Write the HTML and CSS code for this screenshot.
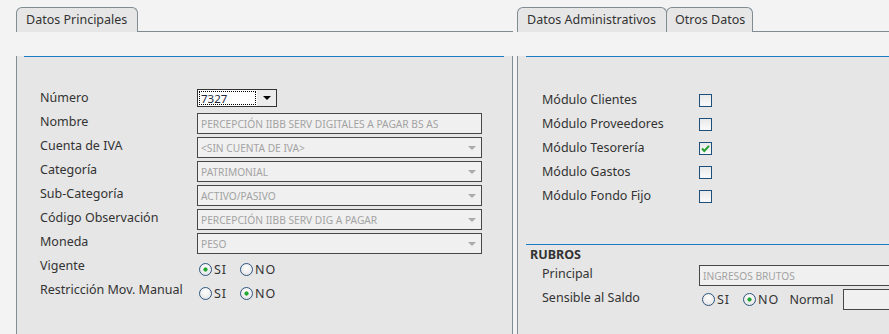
FILE: index.html
```html
<!DOCTYPE html>
<html lang="es">
<head>
    <meta charset="UTF-8">
    <title>Cuenta contable</title>
    <link rel="stylesheet" href="styles.css">
</head>
<body>
    <div class="workspace">
        <section class="panel panel-main">
            <div class="tabs">
                <div class="tab">Datos Principales</div>
                <div class="tab-fill"></div>
            </div>
            <div class="panel-body">
                <hr class="rule">
                <div class="form">
                    <div class="row">
                        <span class="lbl">Número</span>
                        <div class="combo">
                            <span class="combo-value">7327</span>
                            <span class="combo-btn"><span class="caret dark"></span></span>
                        </div>
                    </div>
                    <div class="row">
                        <span class="lbl">Nombre</span>
                        <div class="field">Percepción IIBB Serv Digitales a pagar Bs As</div>
                    </div>
                    <div class="row">
                        <span class="lbl">Cuenta de IVA</span>
                        <div class="field">&lt;Sin cuenta de IVA&gt;<span class="caret"></span></div>
                    </div>
                    <div class="row">
                        <span class="lbl">Categoría</span>
                        <div class="field">Patrimonial<span class="caret"></span></div>
                    </div>
                    <div class="row">
                        <span class="lbl">Sub-Categoría</span>
                        <div class="field">Activo/Pasivo<span class="caret"></span></div>
                    </div>
                    <div class="row">
                        <span class="lbl">Código Observación</span>
                        <div class="field">Percepción IIBB Serv Dig a pagar<span class="caret"></span></div>
                    </div>
                    <div class="row">
                        <span class="lbl">Moneda</span>
                        <div class="field">Peso<span class="caret"></span></div>
                    </div>
                    <div class="row">
                        <span class="lbl">Vigente</span>
                        <div class="options">
                            <span class="radio checked"></span><span class="opt">SI</span>
                            <span class="radio"></span><span class="opt">NO</span>
                        </div>
                    </div>
                    <div class="row">
                        <span class="lbl">Restricción Mov. Manual</span>
                        <div class="options">
                            <span class="radio"></span><span class="opt">SI</span>
                            <span class="radio checked"></span><span class="opt">NO</span>
                        </div>
                    </div>
                </div>
            </div>
        </section>

        <section class="panel panel-side">
            <div class="tabs">
                <div class="tab">Datos Administrativos</div>
                <div class="tab tab-next">Otros Datos</div>
                <div class="tab-fill"></div>
            </div>
            <div class="panel-body">
                <hr class="rule">
                <div class="form form-side">
                    <div class="row"><span class="lbl">Módulo Clientes</span><span class="check"></span></div>
                    <div class="row"><span class="lbl">Módulo Proveedores</span><span class="check"></span></div>
                    <div class="row">
                        <span class="lbl">Módulo Tesorería</span>
                        <span class="check">
                            <svg width="11" height="11" viewBox="0 0 11 11"><path d="M2 5.5 L4.3 8 L9 2.8" fill="none" stroke="#22a032" stroke-width="2"/></svg>
                        </span>
                    </div>
                    <div class="row"><span class="lbl">Módulo Gastos</span><span class="check"></span></div>
                    <div class="row"><span class="lbl">Módulo Fondo Fijo</span><span class="check"></span></div>
                </div>
                <hr class="rule rule-rubros">
                <div class="group-title">RUBROS</div>
                <div class="form">
                    <div class="row">
                        <span class="lbl">Principal</span>
                        <div class="field field-wide">Ingresos Brutos</div>
                    </div>
                    <div class="row">
                        <span class="lbl">Sensible al Saldo</span>
                        <div class="options options-side">
                            <span class="radio"></span><span class="opt">SI</span>
                            <span class="radio checked"></span><span class="opt">NO</span>
                            <span class="opt-label">Normal</span>
                            <div class="field field-small"></div>
                        </div>
                    </div>
                </div>
            </div>
        </section>
    </div>
</body>
</html>
```

FILE: styles.css
```css
body {
    margin: 0;
    background-color: #f3f3f3;
    font-family: "Noto Sans", Arial, sans-serif;
    font-size: 12.5px;
    color: #333;
    overflow: hidden;
}
.workspace {
    display: flex;
    gap: 4px;
    padding: 7px 0 0 16px;
}
.panel { flex-shrink: 0; }
.panel-main { width: 497px; }
.panel-side { width: 420px; }

.tabs { display: flex; height: 25px; }
.tab {
    box-sizing: border-box;
    height: 25px;
    padding: 0 10px 0 9px;
    border: 1px solid #7f8c92;
    border-bottom: none;
    border-radius: 6px 6px 0 0;
    background: #e6e6e6;
    line-height: 24px;
    white-space: nowrap;
}
.tab-next { margin-left: -1px; padding: 0 7px 0 8px; }
.tab-fill { flex: 1; border-bottom: 1px solid #7f8c92; }

.panel-body {
    height: 320px;
    padding: 0 8px 0 7px;
    border: 1px solid #7f8c92;
    border-top: none;
    background: #e6e6e6;
}
.panel-side .panel-body { padding: 0 0 0 8px; }

.rule {
    height: 0;
    margin: 24px 0 0;
    border: 0;
    border-top: 1px solid #1b7bc2;
}
.rule-rubros { margin-top: 36px; }

.form { margin: 29px 0 0 16px; }
.form-side { margin-top: 31px; }
.group-title + .form { margin-top: 0; }
.row { display: flex; align-items: flex-start; height: 24px; }
.lbl { width: 157px; flex-shrink: 0; line-height: 24px; white-space: nowrap; }

.combo {
    box-sizing: border-box;
    display: flex;
    width: 80px;
    height: 18px;
    margin-top: 3px;
    border: 1px solid #333;
    background: #fff;
}
.combo-value {
    flex: 1;
    margin: 1px;
    border: 1px dotted #000;
    font-size: 11.5px;
    line-height: 13px;
    color: #1c2a40;
    padding-left: 1px;
}
.combo-btn {
    width: 19px;
    background: #ececec;
    display: flex;
    align-items: center;
    justify-content: center;
}

.field {
    box-sizing: border-box;
    display: flex;
    align-items: center;
    width: 285px;
    height: 21px;
    margin-top: 3px;
    padding: 0 5px 0 3px;
    border: 1px solid #474747;
    background: #f0f0f0;
    color: #a3a3a3;
    font-size: 10.2px;
    text-transform: uppercase;
    white-space: nowrap;
}
.field-wide { width: 240px; }
.field-small { width: 60px; margin-top: 0; }

.caret {
    width: 0;
    height: 0;
    margin-left: auto;
    border-left: 4px solid transparent;
    border-right: 4px solid transparent;
    border-top: 4px solid #ababab;
}
.caret.dark { margin: 0; border-top-color: #000; }

.options {
    display: flex;
    align-items: center;
    height: 24px;
    padding: 6px 0 0 2px;
    box-sizing: border-box;
}
.options-side { padding: 3px 0 0 3px; }
.radio {
    box-sizing: border-box;
    width: 13px;
    height: 13px;
    border: 1px solid #2c557f;
    border-radius: 50%;
    background: radial-gradient(circle at 50% 35%, #fff, #dedede);
}
.radio.checked {
    background: radial-gradient(circle, #22a832 0 1.8px, transparent 2.4px),
                radial-gradient(circle at 50% 35%, #fff, #dedede);
}
.opt { margin: 0 13px 0 2px; letter-spacing: 1px; }
.opt-label { margin: 0 9px 0 -3px; }

.check {
    box-sizing: border-box;
    width: 13px;
    height: 13px;
    margin-top: 6px;
    border: 1.5px solid #1d4f7c;
    background: linear-gradient(#e8e8e8, #fbfbfb);
    display: flex;
    align-items: center;
    justify-content: center;
}
.check svg { display: block; }

.group-title {
    padding-left: 4px;
    height: 17px;
    line-height: 19px;
    font-weight: bold;
}
```
